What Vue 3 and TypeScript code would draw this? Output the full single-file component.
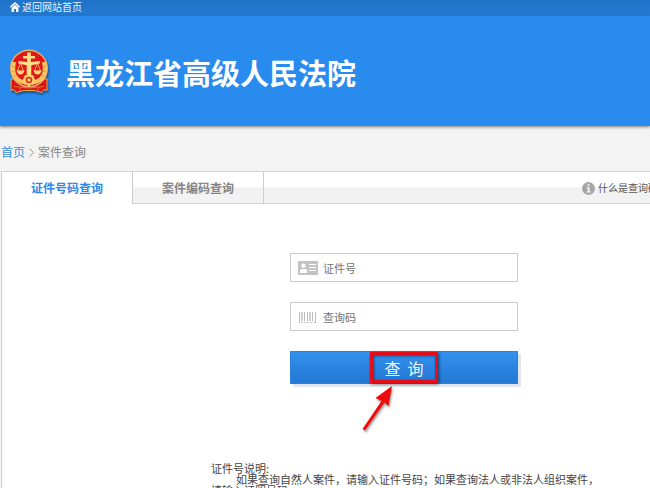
<script setup lang="ts">
import { ref } from 'vue'

type TabKey = 'id' | 'code'

const tabs: { key: TabKey; label: string }[] = [
  { key: 'id', label: '证件号码查询' },
  { key: 'code', label: '案件编码查询' },
]
const active = ref<TabKey>('id')
const idNumber = ref('')
const queryCode = ref('')
const gearTeeth = [0, 45, 90, 135, 180, 225, 270, 315]
</script>

<template>
  <div class="page">
    <nav class="topbar">
      <a href="#" class="home">
        <svg width="10" height="10" viewBox="0 0 10 10" aria-hidden="true">
          <path d="M0.4 5.2 5 1 9.6 5.2" fill="none" stroke="#fff" stroke-width="1.5" />
          <path d="M1.6 5.8 5 2.8 8.4 5.8V10H6V7H4V10H1.6Z" fill="#fff" />
        </svg>
        <span>返回网站首页</span>
      </a>
    </nav>

    <header class="banner">
      <svg class="emblem" width="42" height="48" viewBox="0 0 42 48" aria-hidden="true">
        <path d="M3 31 3 42.500l3-1 2 3 8-2h10l8 2 2-3 3 1V31Z" fill="#d81414" stroke="#e9a94b" stroke-width="1" />
        <circle cx="21" cy="20.5" r="18.3" fill="#e01818" stroke="#e8b070" stroke-width="1.4" />
        <path d="M6 14C3 25 7 33 17 34.500M36 14c3 11-1 19-11 20.500" fill="none" stroke="#f7c55f" stroke-width="4.2" />
        <path d="M4 18l4 2M4 23l4 1M6 28l4-1M38 18l-4 2M38 23l-4 1M36 28l-4-1" stroke="#e08a38" stroke-width="0.7" />
        <path d="M19.200 4.500h3.600V8H27v2.600h-4.200V14l9-1v2.600l-8.500 1.600V28h-4.600V17.200L10.500 15.600V13l8.700 1v-3.400H15V8h4.200Z" fill="#ffe08a" />
        <path d="M12.500 15 9.500 23M12.500 15l3 8M29.500 15l-3 8M29.500 15l3 8" stroke="#ffe08a" stroke-width="0.7" />
        <path d="M8.500 22.500h8q-1 4-4 4t-4-4ZM25.500 22.500h8q-1 4-4 4t-4-4Z" fill="#ffdc7c" />
        <g fill="#ffd56e">
          <rect v-for="a in gearTeeth" :key="a" x="19.500" y="26" width="3" height="3" :transform="`rotate(${a} 21 32)`" />
          <circle cx="21" cy="32" r="5" />
        </g>
        <circle cx="21" cy="32" r="3.300" fill="#d62a18" />
        <circle cx="21" cy="32" r="1.800" fill="#ffd56e" />
        <path d="M6 38.500q15 3 30 0M12 39.500v3M30 39.500v3" fill="none" stroke="#ee8a34" stroke-width="0.8" />
      </svg>
      <h1>黑龙江省高级人民法院</h1>
    </header>

    <main>
      <nav class="crumbs" aria-label="面包屑">
        <a href="#">首页</a>
        <svg width="5" height="9" viewBox="0 0 5 9" aria-hidden="true">
          <path d="M0.500 0.500 4.500 4.500 0.500 8.500" fill="none" stroke="#999" />
        </svg>
        <span>案件查询</span>
      </nav>

      <section class="panel">
        <div class="tabs">
          <button
            v-for="tab in tabs"
            :key="tab.key"
            type="button"
            class="tab"
            :class="{ on: active === tab.key }"
            @click="active = tab.key"
          >{{ tab.label }}</button>
          <a href="#" class="help">
            <svg width="13" height="13" viewBox="0 0 13 13" aria-hidden="true">
              <circle cx="6.500" cy="6.500" r="6.500" fill="#a6a6a6" />
              <path d="M5.500 2.300h2v1.800h-2ZM4.700 5.200h2.800v4h1v1.200H4.700V9.200h1V6.400h-1Z" fill="#f5f5f5" />
            </svg>
            <span>什么是查询码</span>
          </a>
        </div>

        <form class="form" @submit.prevent>
          <label class="field">
            <svg width="20" height="14" viewBox="0 0 20 14" aria-hidden="true">
              <rect width="20" height="14" fill="#c3c3c3" />
              <circle cx="5.500" cy="4.800" r="2.200" fill="#fff" />
              <path d="M2 12V9.500Q2 8 4 8h3q2 0 2 1.500V12Z" fill="#fff" />
              <path d="M11 3.500h7M11 6.500h7M11 9.500h7" stroke="#fff" />
            </svg>
            <input v-model="idNumber" type="text" placeholder="证件号" aria-label="证件号" />
          </label>
          <label class="field">
            <svg width="20" height="14" viewBox="0 0 20 14" aria-hidden="true">
              <path d="M1.500 2v11M6.500 2v9M9.500 2v9M14.500 2v9M17.500 2v11" stroke="#bdbdbd" />
              <path d="M4 2v9M12 2v9" stroke="#cfcfcf" stroke-width="2" />
              <path d="M3 12.500h14" stroke="#c6c6c6" stroke-dasharray="2 1" />
            </svg>
            <input v-model="queryCode" type="text" placeholder="查询码" aria-label="查询码" />
          </label>
          <div class="action">
            <button type="submit" class="submit">查&nbsp; 询</button>
            <div class="highlight"></div>
            <svg class="arrow" width="40" height="52" viewBox="0 0 40 52" aria-hidden="true">
              <path d="M32 2 28.500 22 24.500 18.500 5 46.500 2.500 45 21.500 17 15.500 14Z" fill="#f00b0b" />
            </svg>
          </div>
        </form>

        <div class="notes">
          <p>证件号说明:</p>
          <p class="indent">如果查询自然人案件，请输入证件号码；如果查询法人或非法人组织案件，<br />请输入证照号码。</p>
        </div>
      </section>
    </main>
  </div>
</template>

<style>
body {
  margin: 0;
  overflow: hidden;
  background: #f3f3f3;
}
</style>

<style scoped>
.page {
  height: 100vh;
  overflow: hidden;
  display: flex;
  flex-direction: column;
  font: 12px/16px "Noto Sans CJK SC", sans-serif;
  color: #444;
}
a {
  text-decoration: none;
}
svg {
  flex: none;
}
.topbar {
  flex: none;
  background: linear-gradient(#1f74ca, #2479d0);
  padding: 0 10px;
  height: 16px;
  border-bottom: 1px solid #2c80d6;
  box-sizing: border-box;
}
.home {
  display: flex;
  align-items: center;
  gap: 2px;
  color: #e9f3ff;
  font-size: 10px;
  line-height: 13px;
}
.banner {
  flex: none;
  display: flex;
  align-items: center;
  gap: 16px;
  padding: 2px 8px 0;
  height: 108px;
  background: #2a8bee;
  box-shadow: 0 1px 3px rgba(0, 0, 0, 0.5);
}
.emblem {
  filter: drop-shadow(1px 2px 1px rgba(0, 20, 60, 0.5));
}
h1 {
  margin: 0;
  font-size: 29px;
  line-height: 40px;
  font-weight: 700;
  color: #fff;
  white-space: nowrap;
}
main {
  flex: 1;
  min-height: 0;
  display: flex;
  flex-direction: column;
  padding-left: 1px;
}
.crumbs {
  display: flex;
  align-items: center;
  gap: 4px;
  padding: 18px 0 11px;
  color: #888;
}
.crumbs a {
  color: #3d8de0;
}
.panel {
  flex: 1;
  background: #fff;
  border: solid #d2d2d2;
  border-width: 1px 0 0 1px;
}
.tabs {
  display: flex;
  height: 32px;
  background: linear-gradient(#fff 46%, #f1f1f1 50%, #f3f3f3);
  box-shadow: inset 0 -1px #d2d2d2;
}
.tab {
  width: 131px;
  padding: 0;
  border: 0;
  border-right: 1px solid #ccc;
  background: none;
  font: bold 12px/16px "Noto Sans CJK SC", sans-serif;
  color: #858585;
}
.tab.on {
  background: #fff;
  color: #3287e6;
}
.help {
  display: flex;
  align-items: center;
  gap: 3px;
  margin-left: auto;
  margin-right: -8px;
  font-size: 10px;
  color: #555;
  white-space: nowrap;
}
.form {
  display: grid;
  gap: 20px;
  width: 228px;
  margin-top: 49px;
  margin-left: calc(50% - 36px);
}
.field {
  display: flex;
  align-items: center;
  gap: 5px;
  height: 29px;
  box-sizing: border-box;
  padding: 0 7px;
  border: 1px solid #ccc;
  background: #fff;
}
.field input {
  flex: 1;
  min-width: 0;
  padding: 0;
  border: 0;
  outline: 0;
  background: none;
  font: 11px/16px "Noto Sans CJK SC", sans-serif;
  color: #444;
}
.field input::placeholder {
  color: #757575;
  opacity: 1;
}
.action {
  position: relative;
}
.submit {
  display: block;
  width: 100%;
  height: 33px;
  padding: 0;
  border: 1px solid #2b7fd9;
  background: linear-gradient(#3390ef, #2378d4);
  box-shadow: 3px 3px 0 #e2e6ec;
  font: 16px/20px "Noto Sans CJK SC", sans-serif;
  color: #eef6ff;
}
.highlight {
  position: absolute;
  left: 80px;
  top: 1px;
  width: 62px;
  height: 25px;
  border: 3px solid #e60c18;
  box-shadow: 1px 1px 3px rgba(0, 0, 0, 0.6), inset 1px 1px 3px rgba(0, 0, 0, 0.5);
  pointer-events: none;
}
.arrow {
  position: absolute;
  left: 70px;
  top: 33px;
  filter: drop-shadow(1px 2px 1px rgba(0, 0, 0, 0.4));
  pointer-events: none;
}
.notes {
  margin: 79px 0 0 calc(50% - 115px);
  font-size: 11px;
  line-height: 11px;
  white-space: nowrap;
}
.notes p {
  margin: 0;
}
.notes .indent {
  text-indent: 25px;
}
</style>
